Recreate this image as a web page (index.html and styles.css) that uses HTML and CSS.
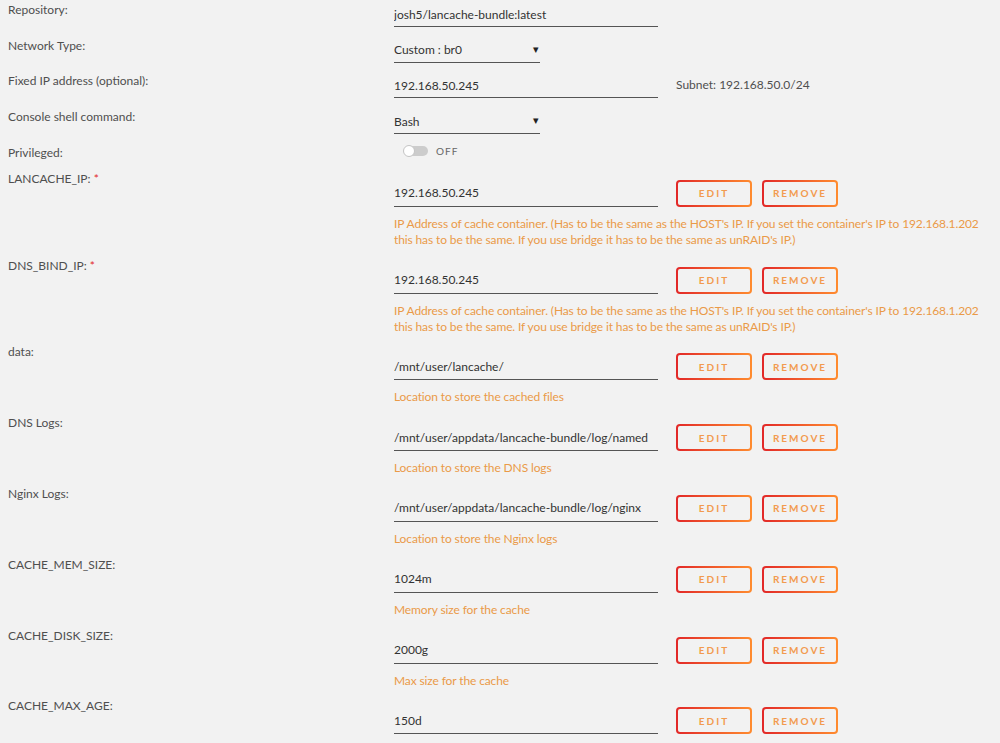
FILE: index.html
```html
<!DOCTYPE html>
<html lang="en-US">

<head>
  <meta charset="utf-8">
  <link rel="stylesheet" href="styles.css">
</head>

<body>

  <form class="config">

    <div class="row">
      <label class="label">Repository:</label>
      <div class="value">
        <input class="field wide" type="text" value="josh5/lancache-bundle:latest">
      </div>
    </div>

    <div class="row">
      <label class="label">Network Type:</label>
      <div class="value">
        <span class="select"><select class="field narrow"><option>Custom : br0</option></select></span>
      </div>
    </div>

    <div class="row">
      <label class="label">Fixed IP address (optional):</label>
      <div class="value">
        <input class="field wide" type="text" value="192.168.50.245">
        <span class="subnet">Subnet: 192.168.50.0/24</span>
      </div>
    </div>

    <div class="row">
      <label class="label">Console shell command:</label>
      <div class="value">
        <span class="select"><select class="field narrow"><option>Bash</option></select></span>
      </div>
    </div>

    <div class="row short">
      <label class="label">Privileged:</label>
      <div class="value">
        <span class="switch"><span class="knob"></span></span>
        <span class="switch-text">OFF</span>
      </div>
    </div>

    <div class="row var">
      <label class="label">LANCACHE_IP: <span class="req">*</span></label>
      <div class="value">
        <div class="line">
          <input class="field wide" type="text" value="192.168.50.245">
          <button type="button" class="btn">Edit</button>
          <button type="button" class="btn">Remove</button>
        </div>
        <div class="desc">IP Address of cache container. (Has to be the same as the HOST's IP. If you set the container's IP to 192.168.1.202 this has to be the same. If you use bridge it has to be the same as unRAID's IP.)</div>
      </div>
    </div>

    <div class="row var">
      <label class="label">DNS_BIND_IP: <span class="req">*</span></label>
      <div class="value">
        <div class="line">
          <input class="field wide" type="text" value="192.168.50.245">
          <button type="button" class="btn">Edit</button>
          <button type="button" class="btn">Remove</button>
        </div>
        <div class="desc">IP Address of cache container. (Has to be the same as the HOST's IP. If you set the container's IP to 192.168.1.202 this has to be the same. If you use bridge it has to be the same as unRAID's IP.)</div>
      </div>
    </div>

    <div class="row var">
      <label class="label">data:</label>
      <div class="value">
        <div class="line">
          <input class="field wide" type="text" value="/mnt/user/lancache/">
          <button type="button" class="btn">Edit</button>
          <button type="button" class="btn">Remove</button>
        </div>
        <div class="desc">Location to store the cached files</div>
      </div>
    </div>

    <div class="row var">
      <label class="label">DNS Logs:</label>
      <div class="value">
        <div class="line">
          <input class="field wide" type="text" value="/mnt/user/appdata/lancache-bundle/log/named">
          <button type="button" class="btn">Edit</button>
          <button type="button" class="btn">Remove</button>
        </div>
        <div class="desc">Location to store the DNS logs</div>
      </div>
    </div>

    <div class="row var">
      <label class="label">Nginx Logs:</label>
      <div class="value">
        <div class="line">
          <input class="field wide" type="text" value="/mnt/user/appdata/lancache-bundle/log/nginx">
          <button type="button" class="btn">Edit</button>
          <button type="button" class="btn">Remove</button>
        </div>
        <div class="desc">Location to store the Nginx logs</div>
      </div>
    </div>

    <div class="row var">
      <label class="label">CACHE_MEM_SIZE:</label>
      <div class="value">
        <div class="line">
          <input class="field wide" type="text" value="1024m">
          <button type="button" class="btn">Edit</button>
          <button type="button" class="btn">Remove</button>
        </div>
        <div class="desc">Memory size for the cache</div>
      </div>
    </div>

    <div class="row var">
      <label class="label">CACHE_DISK_SIZE:</label>
      <div class="value">
        <div class="line">
          <input class="field wide" type="text" value="2000g">
          <button type="button" class="btn">Edit</button>
          <button type="button" class="btn">Remove</button>
        </div>
        <div class="desc">Max size for the cache</div>
      </div>
    </div>

    <div class="row var">
      <label class="label">CACHE_MAX_AGE:</label>
      <div class="value">
        <div class="line">
          <input class="field wide" type="text" value="150d">
          <button type="button" class="btn">Edit</button>
          <button type="button" class="btn">Remove</button>
        </div>
      </div>
    </div>

  </form>

</body>

</html>
```

FILE: styles.css
```css
body {
  margin: 0;
  background-color: #f2f2f2;
  font-family: Lato, "Liberation Sans", sans-serif;
  font-size: 12px;
  line-height: 16px;
  color: #4f4f4f;
  overflow: hidden;
}

.config {
  padding: 2px 0 0 8px;
}

.row {
  display: grid;
  grid-template-columns: 386px 1fr;
  height: 35.7px;
}

.row.short { height: 26px;}

.row.var {
  height: auto;
  padding-bottom: 9.8px;
}

.label {
  display: block;
}

.req { color: #e22828;}

.value {
  display: flex;
  align-items: flex-start;
}

.row.var .value {
  flex-direction: column;
  padding-top: 9px;
}

.line {
  display: flex;
  align-items: center;
}

.field {
  box-sizing: border-box;
  height: 25px;
  padding: 0;
  border: 0;
  border-bottom: 1px solid #555;
  background: none;
  font-family: inherit;
  font-size: 12px;
  color: #333;
  outline: none;
  border-radius: 0;
}

.row.var .field { height: 27px;}

.wide { width: 264px;}
.narrow { width: 146px;}

select.field {
  -webkit-appearance: none;
  appearance: none;
}

.select {
  position: relative;
  display: inline-block;
}

/* little arrow to the right of the dropdowns */
.select::after {
  content: "\25BE";
  position: absolute;
  right: 1px;
  top: 3px;
  font-size: 11px;
  color: #222;
  pointer-events: none;
}

.subnet {
  margin-left: 18px;
  margin-top: 4px;
}

/* privileged switch */
.switch {
  position: relative;
  display: inline-block;
  width: 24px;
  height: 10px;
  margin: 1px 0 0 10px;
  border-radius: 5px;
  background-color: #ccc;
}

.knob {
  position: absolute;
  left: -1px;
  top: -1px;
  width: 10px;
  height: 10px;
  border-radius: 50%;
  background-color: white;
  border: 1px solid #c4c4c4;
}

.switch-text {
  margin-left: 8px;
  font-size: 10px;
  line-height: 12px;
  letter-spacing: 1px;
  color: #666;
}

.btn {
  box-sizing: border-box;
  width: 76px;
  height: 27px;
  margin-left: 10px;
  padding: 0;
  border: 2px solid transparent;
  border-radius: 4px;
  background: linear-gradient(#f2f2f2, #f2f2f2) padding-box,
    linear-gradient(90deg, #e22828, #ff8c2f) border-box;
  font-family: inherit;
  font-size: 10px;
  font-weight: bold;
  letter-spacing: 2px;
  text-transform: uppercase;
  color: #f29b4f;
  cursor: pointer;
}

.line .field + .btn { margin-left: 18px;}

.desc {
  margin-top: 9px;
  width: 600px;
  letter-spacing: -0.12px;
  color: #ea9a48;
}
```
